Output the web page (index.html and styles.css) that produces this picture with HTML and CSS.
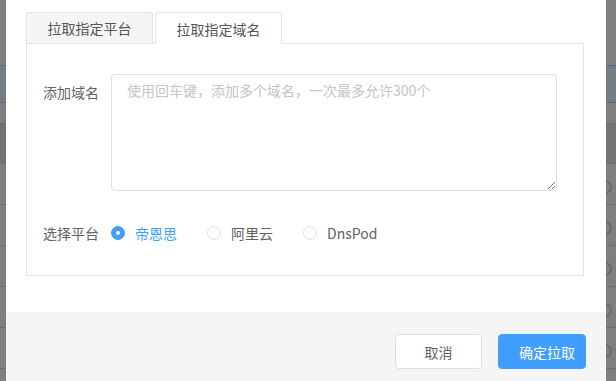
FILE: index.html
```html
<!DOCTYPE html>
<html lang="zh-CN">
<head>
	<meta charset="utf-8">
	<meta name="viewport" content="width=device-width, initial-scale=1">
	<title>拉取域名</title>
	<link rel="stylesheet" href="styles.css">
</head>
<body>
	<div class="screen">
		<div class="backdrop left">
			<div class="row top"></div>
			<div class="row head"></div>
			<div class="row gap"></div>
			<div class="row dark"></div>
			<div class="row"></div>
			<div class="row"></div>
			<div class="row"></div>
			<div class="row"></div>
			<div class="row"></div>
		</div>

		<div class="dialog">
			<div class="dialog-body">
				<div class="tabs">
					<div class="tab">拉取指定平台</div>
					<div class="tab active">拉取指定域名</div>
				</div>
				<div class="panel">
					<div class="form-item">
						<label class="form-label">添加域名</label>
						<textarea class="domains" placeholder="使用回车键，添加多个域名，一次最多允许300个"></textarea>
					</div>
					<div class="form-item radios-item">
						<label class="form-label">选择平台</label>
						<div class="radios">
							<label class="radio checked"><span class="dot"></span>帝恩思</label>
							<label class="radio"><span class="dot"></span>阿里云</label>
							<label class="radio"><span class="dot"></span>DnsPod</label>
						</div>
					</div>
				</div>
			</div>
			<div class="dialog-footer">
				<button class="btn" type="button">取消</button>
				<button class="btn primary" type="button">确定拉取</button>
			</div>
		</div>

		<div class="backdrop right">
			<div class="row top"></div>
			<div class="row head"></div>
			<div class="row gap"></div>
			<div class="row dark"></div>
			<div class="row"><span class="ring"></span></div>
			<div class="row"><span class="ring"></span></div>
			<div class="row"><span class="ring"></span></div>
			<div class="row"><span class="ring"></span></div>
			<div class="row"><span class="ring"></span></div>
		</div>
	</div>
</body>
</html>
```

FILE: styles.css
```css
*{
	margin: 0;
	box-sizing: border-box;
}

body{
	background: #7f7f7f;
	font-family: "Noto Sans CJK SC", "Noto Sans", sans-serif;
	font-size: 14px;
	color: #606266;
	overflow: hidden;
}

.screen{
	display: flex;
	height: 381px;
}

/* the table behind the dimmed mask */
.backdrop{
	display: flex;
	flex-direction: column;
	overflow: hidden;
	background: #7f7f7f;
}

.backdrop.left{
	width: 6px;
}

.backdrop.right{
	width: 10px;
}

.row{
	height: 41px;
	border-bottom: 1px solid #6c6c6c;
	display: flex;
	align-items: center;
	flex-shrink: 0;
}

.row.top{
	height: 66px;
	border-bottom: 1px solid #3f6c90;
}

.row.head{
	height: 37px;
	background: #737d82;
	border-bottom: 1px solid #3f6c90;
}

.row.gap{
	height: 21px;
}

.row.dark{
	height: 40px;
	background: #747474;
}

.ring{
	width: 14px;
	height: 14px;
	margin-left: -8px;
	margin-top: 6px;
	border: 2px solid #6a6a6a;
	border-radius: 50%;
	flex-shrink: 0;
}

.dialog{
	width: 600px;
	display: flex;
	flex-direction: column;
	background: #fff;
}

.dialog-body{
	padding: 12px 22px 0 20px;
	flex: 1;
}

.tabs{
	display: flex;
	gap: 2px;
	height: 31px;
}

.tab{
	width: 127px;
	display: flex;
	align-items: center;
	justify-content: center;
	background: #f5f5f5;
	border: 1px solid #e4e4e4;
	border-bottom: none;
	border-radius: 3px 3px 0 0;
	color: #555;
}

.tab.active{
	background: #fff;
	height: 32px;
	position: relative;
	z-index: 1;
}

.panel{
	border: 1px solid #e4e4e4;
	height: 233px;
	padding: 30px 26px 0 16px;
}

.form-item{
	display: flex;
	align-items: flex-start;
}

.form-label{
	width: 68px;
	line-height: 36px;
	flex-shrink: 0;
}

.domains{
	width: 446px;
	height: 117px;
	border: 1px solid #dcdfe6;
	border-radius: 4px;
	padding: 5px 15px;
	font-family: inherit;
	font-size: 14px;
	line-height: 1.5;
	color: #606266;
}

.domains::placeholder{
	color: #c0c4cc;
}

.radios-item{
	margin-top: 24px;
	align-items: center;
}

.radios{
	display: flex;
	align-items: center;
}

.radio{
	display: flex;
	align-items: center;
	gap: 10px;
	margin-right: 30px;
	line-height: 36px;
	color: #606266;
}

.dot{
	width: 14px;
	height: 14px;
	border: 1px solid #dcdfe6;
	border-radius: 50%;
	background: #fff;
	display: flex;
	align-items: center;
	justify-content: center;
}

.radio.checked{
	color: #409eff;
}

.radio.checked .dot{
	background: #409eff;
	border-color: #409eff;
}

.radio.checked .dot::after{
	content: "";
	width: 4px;
	height: 4px;
	border-radius: 50%;
	background: #fff;
}

.dialog-footer{
	height: 69px;
	background: #f5f5f5;
	display: flex;
	justify-content: flex-end;
	align-items: flex-start;
	gap: 16px;
	padding: 22px 20px 0 0;
}

.btn{
	height: 35px;
	width: 87px;
	padding: 0;
	border: 1px solid #dcdfe6;
	border-radius: 4px;
	background: #fff;
	color: #606266;
	font-family: inherit;
	font-size: 14px;
}

.btn.primary{
	width: 88px;
	padding-left: 10px;
	background: #409eff;
	border-color: #409eff;
	color: #fff;
}
```
